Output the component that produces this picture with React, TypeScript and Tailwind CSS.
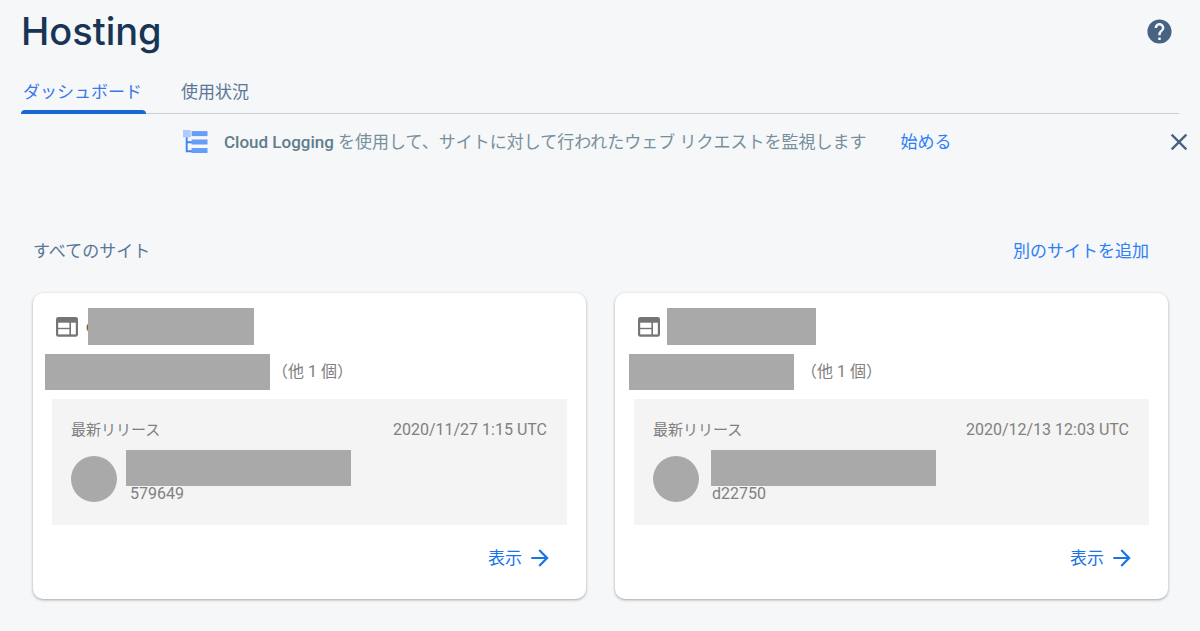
import { MdArrowForward, MdClose, MdHelp } from "react-icons/md";

type Site = {
  initial: string;
  nameMask: string;
  domainMask: string;
  releasedAt: string;
  releaseId: string;
  authorMask: string;
};

const sites: Site[] = [
  {
    initial: "c",
    nameMask: "w-[166px]",
    domainMask: "ml-3 mr-0.5 w-[225px]",
    releasedAt: "2020/11/27 1:15 UTC",
    releaseId: "579649",
    authorMask: "ml-0",
  },
  {
    initial: "",
    nameMask: "w-[149px]",
    domainMask: "ml-3.5 mr-[7px] w-[165px]",
    releasedAt: "2020/12/13 12:03 UTC",
    releaseId: "d22750",
    authorMask: "ml-[3px]",
  },
];

function LoggingIcon() {
  return (
    <svg width="25" height="24" viewBox="0 0 25 24" aria-hidden="true">
      <path d="M3.7 7V21.2H9M3.7 12.2H9" fill="none" stroke="#3f83f6" strokeWidth="1.9" />
      <rect x="0" y="0" width="7.7" height="7.4" fill="#aecbfa" />
      <g fill="#669df6">
        <rect x="8.6" y="1.1" width="15.9" height="5" />
        <rect x="8.6" y="9.5" width="15.9" height="5" />
        <rect x="8.6" y="18" width="15.9" height="5" />
      </g>
    </svg>
  );
}

function SiteIcon() {
  return (
    <svg width="22" height="20" viewBox="0 0 22 20" aria-hidden="true">
      <rect width="22" height="19.7" rx="2.3" fill="#757575" />
      <g fill="#fff">
        <rect x="2.2" y="5.7" width="11.2" height="5.1" />
        <rect x="2.2" y="12.2" width="11.2" height="5.2" />
        <rect x="15" y="5.7" width="4.8" height="11.7" />
      </g>
    </svg>
  );
}

function SiteCard({ site }: { site: Site }) {
  return (
    <article className="rounded-[10px] bg-white pt-[15px] pb-[27px] text-[15px] text-[#808080] shadow-[0_1px_3px_rgba(0,0,0,0.35)]">
      <div className="flex items-center pl-[23px]">
        <SiteIcon />
        <div className="relative ml-2 flex h-[37px] items-center">
          <span className="text-base leading-5 font-medium text-[#616161]">{site.initial}</span>
          <span
            className={`absolute inset-y-0 bg-[#a9a9a9] ${site.initial ? "left-0.5" : "left-0 -ml-px"} ${site.nameMask}`}
          />
        </div>
      </div>
      <div className="mt-[9px] flex h-9 items-center text-base">
        <span className={`h-9 bg-[#a9a9a9] ${site.domainMask}`} />
        <span>（他 1 個）</span>
      </div>
      <div className="mx-[19px] mt-[9px] h-[126px] bg-[#f4f4f4] pt-5 pr-5 pl-[19px]">
        <div className="flex items-center justify-between leading-[22px]">
          <span>最新リリース</span>
          <time className="text-base leading-[22px]">{site.releasedAt}</time>
        </div>
        <div className="mt-[9px] flex items-start">
          <span className="mt-1.5 size-[46px] shrink-0 rounded-full bg-[#a9a9a9]" />
          <div className="ml-[9px]">
            <div className={`h-9 w-[225px] bg-[#a9a9a9] ${site.authorMask}`} />
            <div className="pl-1 text-base leading-4">{site.releaseId}</div>
          </div>
        </div>
      </div>
      <div className="mt-[19px] flex justify-end pr-[33px]">
        <a href="#site" className="flex items-center gap-[5px] text-[17px] leading-7 text-[#1a73e8]">
          表示
          <MdArrowForward size={26} aria-hidden="true" />
        </a>
      </div>
    </article>
  );
}

export default function App() {
  return (
    <div className="min-h-screen bg-[#f5f7f9] pb-8 font-['Roboto','Noto_Sans_CJK_JP',sans-serif] text-[17px]">
      <header className="flex items-center justify-between pt-[7px] pr-[26px] pl-[21px]">
        <h1 className="font-['Inter',sans-serif] text-[38px] leading-[48px] font-medium text-[#193555]">Hosting</h1>
        <button type="button" aria-label="ヘルプ" className="text-[#476282]">
          <MdHelp size={29} />
        </button>
      </header>

      <nav className="mt-[15px] mr-[21px] ml-[21px] flex h-[44px] gap-8 border-b border-[#c3cfd9] leading-[44px]">
        <a href="#dashboard" aria-current="page" className="relative pr-1 pl-0.5 text-[#3b78e7]">
          ダッシュボード
          <span className="absolute inset-x-0 -bottom-px h-1 rounded-t bg-[#1967d2]" />
        </a>
        <a href="#usage" className="px-[3px] text-[#5b7696]">
          使用状況
        </a>
      </nav>

      <section className="flex items-center pt-[14px] pr-[7px] pl-[183px] leading-7">
        <LoggingIcon />
        <p className="ml-4 text-[#78909c]">
          <strong className="font-medium text-[#607d8b]">Cloud Logging</strong> を使用して、サイトに対して行われたウェブ リクエストを監視します
        </p>
        <a href="#logging" className="ml-[34px] text-[#2f80f5]">
          始める
        </a>
        <button type="button" aria-label="閉じる" className="ml-auto text-[#476282]">
          <MdClose size={28} />
        </button>
      </section>

      <main className="mt-[81px] pr-8 pl-[33px]">
        <div className="flex items-center justify-between pr-[19px] leading-7">
          <h2 className="text-[#5b7696]">すべてのサイト</h2>
          <a href="#add" className="text-[#2f80f5]">
            別のサイトを追加
          </a>
        </div>
        <div className="mt-7 grid grid-cols-2 gap-[29px]">
          {sites.map((site) => (
            <SiteCard key={site.releaseId} site={site} />
          ))}
        </div>
      </main>
    </div>
  );
}
